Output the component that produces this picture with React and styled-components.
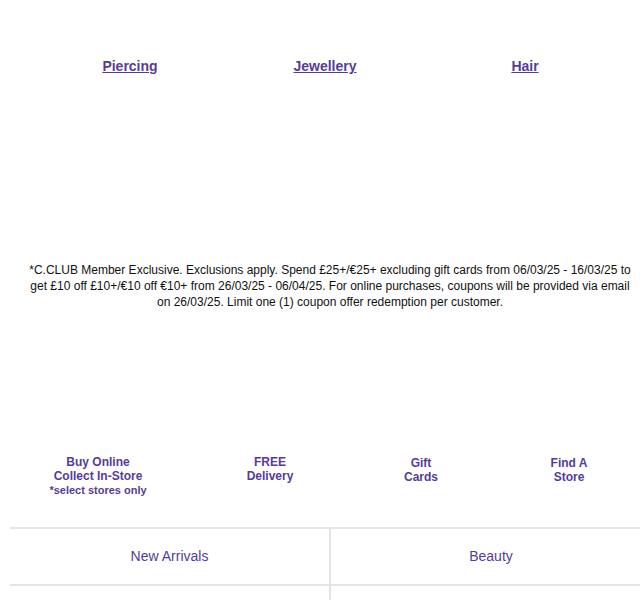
import React from "react";
import styled, { createGlobalStyle } from "styled-components";

const Global = createGlobalStyle`
  html, body { margin: 0; padding: 0; background: #fff; overflow-x: hidden; }
  body { font-family: "Liberation Sans", Arial, sans-serif; }
`;

const PURPLE = "#563c98";

const Page = styled.div`
  width: 640px;
`;

const TopNav = styled.nav`
  display: grid;
  grid-template-columns: 196px 194px 206px;
  padding: 58px 0 0 32px;
`;

const TopLink = styled.a`
  justify-self: center;
  font-size: 14px;
  line-height: 16px;
  font-weight: 700;
  color: ${PURPLE};
  text-decoration: underline;
`;

const Disclaimer = styled.p`
  margin: 188px 0 0 10px;
  width: 640px;
  box-sizing: border-box;
  padding: 0 17px;
  font-size: 12px;
  line-height: 16px;
  color: #111;
  text-align: center;
`;

const Features = styled.div`
  display: grid;
  grid-template-columns: 196px 148px 154px 142px;
  margin-top: 145px;
`;

const Feature = styled.a`
  display: flex;
  flex-direction: column;
  align-items: center;
  text-align: center;
  font-size: 12px;
  line-height: 14px;
  font-weight: 700;
  color: ${PURPLE};
  text-decoration: none;
  padding-top: ${(p) => (p.$nudge ? "1px" : "0")};
`;

const Note = styled.span`
  font-size: 11px;
`;

const CategoryGrid = styled.div`
  display: grid;
  grid-template-columns: 321px 320px;
  margin: 30px 0 0 10px;
  width: 641px;
  border-top: 2px solid #e4e4e4;
`;

const Cell = styled.a`
  display: block;
  min-height: 16px;
  padding: 19px 0 20px;
  text-align: center;
  font-size: 14px;
  line-height: 16px;
  color: ${PURPLE};
  text-decoration: none;
  border-bottom: 2px solid #e4e4e4;
  border-right: ${(p) => (p.$left ? "2px solid #e4e4e4" : "none")};
`;

export default function App() {
  return (
    <Page>
      <Global />
      <TopNav>
        <TopLink href="#">Piercing</TopLink>
        <TopLink href="#">Jewellery</TopLink>
        <TopLink href="#">Hair</TopLink>
      </TopNav>
      <Disclaimer>
        *C.CLUB Member Exclusive. Exclusions apply. Spend £25+/€25+ excluding gift cards from 06/03/25 - 16/03/25 to get £10 off £10+/€10 off €10+ from 26/03/25 - 06/04/25. For online purchases, coupons will be provided via email on 26/03/25. Limit one (1) coupon offer redemption per customer.
      </Disclaimer>
      <Features>
        <Feature href="#">
          <span>Buy Online</span>
          <span>Collect In-Store</span>
          <Note>*select stores only</Note>
        </Feature>
        <Feature href="#">
          <span>FREE</span>
          <span>Delivery</span>
        </Feature>
        <Feature href="#" $nudge>
          <span>Gift</span>
          <span>Cards</span>
        </Feature>
        <Feature href="#" $nudge>
          <span>Find A</span>
          <span>Store</span>
        </Feature>
      </Features>
      <CategoryGrid>
        <Cell href="#" $left>New Arrivals</Cell>
        <Cell href="#">Beauty</Cell>
        <Cell href="#" $left />
        <Cell href="#" />
      </CategoryGrid>
    </Page>
  );
}
